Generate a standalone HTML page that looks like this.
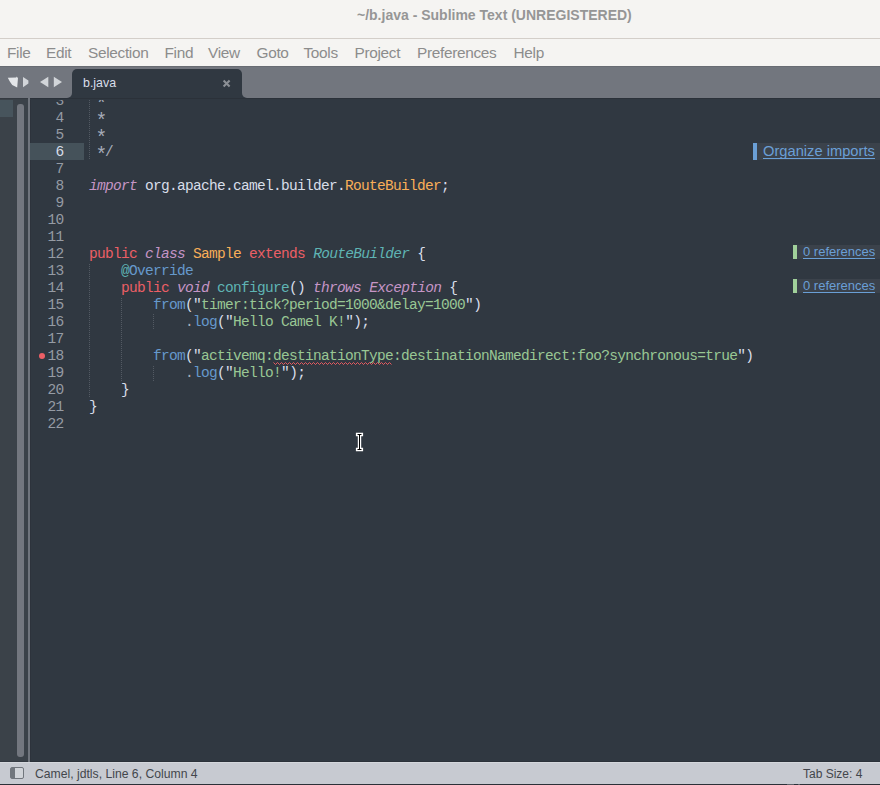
<!DOCTYPE html>
<html><head><meta charset="utf-8">
<style>
html,body{margin:0;padding:0;width:880px;height:785px;overflow:hidden;background:#303841;}
*{box-sizing:border-box;}
.abs{position:absolute;}
#title{left:0;top:0;width:880px;height:38px;background:#f5f4f2;}
#title span{position:absolute;left:357px;top:7px;font:bold 14px/16px "Liberation Sans",sans-serif;color:#969696;white-space:pre;}
#tline{left:0;top:38px;width:880px;height:1px;background:#d3cec9;box-shadow:0 1px 0 #f9f8f7;}
#menu{left:0;top:39px;width:880px;height:27px;background:#f5f4f2;}
#menu span{position:absolute;top:5px;font:15.4px/18px "Liberation Sans",sans-serif;letter-spacing:-0.32px;color:#8c8c8c;white-space:pre;}
#tabbar{left:0;top:66px;width:880px;height:32px;background:#72767e;}
#tabbar .ds{position:absolute;left:62px;top:20px;width:190px;height:12px;background:#303841;}
#tabbar .lp{position:absolute;left:0;top:0;width:72px;height:32px;background:#72767e;border-bottom-right-radius:5px;}
#tabbar .rp{position:absolute;left:242px;top:0;width:638px;height:32px;background:#72767e;border-bottom-left-radius:5px;}
#tabbar .top{position:absolute;left:0;top:0;width:880px;height:1px;background:#686c73;}
#tab{left:72px;top:69px;width:170px;height:29px;background:#303841;border-radius:5px 5px 0 0;}
#tab .lbl{position:absolute;left:11px;top:7px;font:12.4px/14px "Liberation Sans",sans-serif;color:#d8dee9;white-space:pre;}
#leftpanel{left:0;top:98px;width:28px;height:664px;background:#3b4249;}
#vline{left:28px;top:98px;width:2px;height:664px;background:#70757d;}
#editor{left:30px;top:98px;width:850px;height:664px;background:#303841;overflow:hidden;clip-path:inset(2px 0 0 0);}
#status{left:0;top:762px;width:880px;height:22px;background:#c7cad1;}
#status .tl{position:absolute;left:0;top:0;width:880px;height:1px;background:#d4d7dc;}
#status span{position:absolute;top:5px;font:12.2px/14px "Liberation Sans",sans-serif;color:#43464c;white-space:pre;}
#bottom{left:0;top:784px;width:880px;height:1px;background:#2b3038;}
.code{position:absolute;left:0;width:850px;height:17px;font:14.5px/17px "Liberation Mono",monospace;letter-spacing:-0.7px;white-space:pre;color:#d8dee9;}
.ln{position:absolute;left:0;top:1px;width:33.4px;text-align:right;color:#959ba4;}
.tx{position:absolute;left:59px;top:1px;}
.guide{position:absolute;width:1px;background:repeating-linear-gradient(to bottom,#535a63 0,#535a63 1px,transparent 1px,transparent 2px);}
#curhl{position:absolute;left:0;top:45px;width:54px;height:17px;background:#45525a;}
.cur .ln{color:#d8dee9}
.q{color:#d8dee9}.d{color:#a6acb9}
.phtxt{position:absolute;font-family:"Liberation Sans",sans-serif;color:#6a9fd6;white-space:pre;}
.st{display:inline-block;width:8px;transform:translate(0px,4px) scale(1.35);}
.r{color:#ec5f66}.p{color:#c695c6;font-style:italic}.o{color:#f9ae58}.t{color:#5fb4b4}.ti{color:#5fb4b4;font-style:italic}.b{color:#6699cc}.g{color:#99c794}.c{color:#a6acb9}
</style></head><body>
<div id="title" class="abs"><span>~/b.java - Sublime Text (UNREGISTERED)</span></div>
<div id="tline" class="abs"></div>
<div id="menu" class="abs">
<span style="left:7px">File</span><span style="left:46px">Edit</span><span style="left:88px">Selection</span><span style="left:164.5px">Find</span><span style="left:208px">View</span><span style="left:256.5px">Goto</span><span style="left:303.5px">Tools</span><span style="left:354.5px">Project</span><span style="left:417px">Preferences</span><span style="left:513.5px">Help</span>
</div>
<div id="tabbar" class="abs"><div class="ds"></div><div class="lp"></div><div class="rp"></div><div class="top"></div></div>
<svg class="abs" style="left:0;top:66px" width="72" height="32" viewBox="0 66 72 32">
<polygon points="7.8,77.8 16.3,77.6 16.6,76.6 17.3,77.6 18,77.8 17.2,87.4 12.2,85 9.8,81.6" fill="#e4e6e9"/>
<polygon points="23,77 28.4,80.6 28.4,83.4 23,87.2" fill="#d2d5d9"/>
<polygon points="40,82 48.3,76.8 48.3,87.2" fill="#d2d5d9"/>
<polygon points="53.8,76.8 62,82 53.8,87.2" fill="#d2d5d9"/>
</svg>
<div id="tab" class="abs"><span class="lbl">b.java</span></div>
<div id="leftpanel" class="abs"></div>
<div id="vline" class="abs"></div>
<div class="abs" style="left:0;top:98px;width:28px;height:1px;background:#353a41"></div>
<div class="abs" style="left:0;top:100px;width:13px;height:17px;background:#47545c"></div>
<div class="abs" style="left:17px;top:104px;width:7px;height:653px;background:#73777f;border-radius:3px"></div>
<div class="abs" style="left:0;top:761px;width:28px;height:1px;background:#343a42"></div>
<div id="editor" class="abs">
<div class="abs" style="left:0;top:0;width:1px;height:664px;background:#2d333c"></div>
<div id="curhl"></div>
<div class="guide" style="left:59px;top:2px;height:59px"></div>
<div class="guide" style="left:59px;top:166px;height:133px"></div>
<div class="guide" style="left:91px;top:200px;height:83px"></div>
<div class="guide" style="left:123px;top:216px;height:15px"></div>
<div class="guide" style="left:123px;top:268px;height:15px"></div>
<div class="abs" style="left:9px;top:255px;width:6px;height:6px;border-radius:50%;background:#ec5f66"></div>
<div class="code" style="top:-6px"><span class="ln">3</span><span class="tx"><span class="c"> <span class="st">*</span></span></span></div>
<div class="code" style="top:11px"><span class="ln">4</span><span class="tx"><span class="c"> <span class="st">*</span></span></span></div>
<div class="code" style="top:28px"><span class="ln">5</span><span class="tx"><span class="c"> <span class="st">*</span></span></span></div>
<div class="code cur" style="top:45px"><span class="ln">6</span><span class="tx"><span class="c"> <span class="st">*</span>/</span></span></div>
<div class="code" style="top:62px"><span class="ln">7</span><span class="tx"></span></div>
<div class="code" style="top:79px"><span class="ln">8</span><span class="tx"><span class="p">import</span> org.apache.camel.builder.<span class="o">RouteBuilder</span>;</span></div>
<div class="code" style="top:96px"><span class="ln">9</span><span class="tx"></span></div>
<div class="code" style="top:113px"><span class="ln">10</span><span class="tx"></span></div>
<div class="code" style="top:130px"><span class="ln">11</span><span class="tx"></span></div>
<div class="code" style="top:147px"><span class="ln">12</span><span class="tx"><span class="r">public</span> <span class="p">class</span> <span class="o">Sample</span> <span class="r">extends</span> <span class="ti">RouteBuilder</span> {</span></div>
<div class="code" style="top:164px"><span class="ln">13</span><span class="tx">    <span class="t">@</span><span class="b">Override</span></span></div>
<div class="code" style="top:181px"><span class="ln">14</span><span class="tx">    <span class="r">public</span> <span class="p">void</span> <span class="t">configure</span>() <span class="p">throws</span> <span class="p">Exception</span> {</span></div>
<div class="code" style="top:198px"><span class="ln">15</span><span class="tx">        <span class="b">from</span>(<span class="q">"</span><span class="g">timer:tick?period=1000&amp;delay=1000</span><span class="q">"</span>)</span></div>
<div class="code" style="top:215px"><span class="ln">16</span><span class="tx">            <span class="d">.</span><span class="b">log</span>(<span class="q">"</span><span class="g">Hello Camel K!</span><span class="q">"</span>);</span></div>
<div class="code" style="top:232px"><span class="ln">17</span><span class="tx"></span></div>
<div class="code" style="top:249px"><span class="ln">18</span><span class="tx">        <span class="b">from</span>(<span class="q">"</span><span class="g">activemq:destinationType:destinationNamedirect:foo?synchronous=true</span><span class="q">"</span>)</span></div>
<div class="code" style="top:266px"><span class="ln">19</span><span class="tx">            <span class="d">.</span><span class="b">log</span>(<span class="q">"</span><span class="g">Hello!</span><span class="q">"</span>);</span></div>
<div class="code" style="top:283px"><span class="ln">20</span><span class="tx">    }</span></div>
<div class="code" style="top:300px"><span class="ln">21</span><span class="tx">}</span></div>
<div class="code" style="top:317px"><span class="ln">22</span><span class="tx"></span></div>
</div>
<div class="abs" style="left:30px;top:98px;width:850px;height:1px;background:#2b3139"></div>
<div class="abs" style="left:753px;top:143px;width:4px;height:17px;background:#6a9fd6"></div>
<div class="abs" style="left:757px;top:143px;width:123px;height:17px;background:#3b424b"></div>
<div class="phtxt" style="left:763px;top:143px;font-size:14.7px;line-height:17px;">Organize imports</div>
<div class="abs" style="left:763px;top:158px;width:112px;height:1px;background:#6a9fd6"></div>
<div class="abs" style="left:793px;top:245px;width:4px;height:14px;background:#a0d09a"></div>
<div class="abs" style="left:797px;top:245px;width:83px;height:14px;background:#3b424b"></div>
<div class="phtxt" style="left:803px;top:245px;font-size:13px;line-height:14px;">0 references</div>
<div class="abs" style="left:803px;top:258px;width:72px;height:1px;background:#6a9fd6"></div>
<div class="abs" style="left:793px;top:279px;width:4px;height:14px;background:#a0d09a"></div>
<div class="abs" style="left:797px;top:279px;width:83px;height:14px;background:#3b424b"></div>
<div class="phtxt" style="left:803px;top:279px;font-size:13px;line-height:14px;">0 references</div>
<div class="abs" style="left:803px;top:292px;width:72px;height:1px;background:#6a9fd6"></div>
<svg class="abs" style="left:222px;top:79px" width="10" height="10" viewBox="0 0 10 10"><path d="M1.6 1.6 L7.6 7.6 M7.6 1.6 L1.6 7.6" stroke="#8b8f95" stroke-width="2.1" stroke-linecap="butt"/></svg>
<svg class="abs" style="left:0;top:0" width="880" height="785" viewBox="0 0 880 785"><polyline points="273.5,362.5 275.5,364.5 277.5,362.5 279.5,364.5 281.5,362.5 283.5,364.5 285.5,362.5 287.5,364.5 289.5,362.5 291.5,364.5 293.5,362.5 295.5,364.5 297.5,362.5 299.5,364.5 301.5,362.5 303.5,364.5 305.5,362.5 307.5,364.5 309.5,362.5 311.5,364.5 313.5,362.5 315.5,364.5 317.5,362.5 319.5,364.5 321.5,362.5 323.5,364.5 325.5,362.5 327.5,364.5 329.5,362.5 331.5,364.5 333.5,362.5 335.5,364.5 337.5,362.5 339.5,364.5 341.5,362.5 343.5,364.5 345.5,362.5 347.5,364.5 349.5,362.5 351.5,364.5 353.5,362.5 355.5,364.5 357.5,362.5 359.5,364.5 361.5,362.5 363.5,364.5 365.5,362.5 367.5,364.5 369.5,362.5 371.5,364.5 373.5,362.5 375.5,364.5 377.5,362.5 379.5,364.5 381.5,362.5 383.5,364.5 385.5,362.5 387.5,364.5 389.5,362.5 391.5,364.5" fill="none" stroke="#e85a60" stroke-width="1"/><path d="M357.6 434.5 H361.4 M359.5 434.5 V449.5 M357.6 449.5 H361.4" stroke="#ffffff" stroke-width="3.4" stroke-linecap="square" stroke-linejoin="round" fill="none"/><path d="M357.5 434.5 H361.5 M359.5 434.5 V449.5 M357.5 449.5 H361.5" stroke="#000000" stroke-width="1" fill="none"/></svg>
<div id="status" class="abs"><div class="tl"></div>
<div class="abs" style="left:10px;top:5px;width:14px;height:12px;border:1px solid #71767d;border-radius:2px;background:linear-gradient(to right,#71767d 0,#71767d 4px,#d0d3d8 4px)"></div>
<span style="left:35px">Camel, jdtls, Line 6, Column 4</span>
<span style="left:803px;font-size:12px">Tab Size: 4</span>
</div>
<div id="bottom" class="abs"></div>
<div class="abs" style="left:30px;top:761px;width:850px;height:1px;background:#2b3139"></div>
<div class="abs" style="left:787px;top:784px;width:7px;height:1px;background:#5c6168"></div>
<div class="abs" style="left:798px;top:784px;width:2px;height:1px;background:#5c6168"></div>
</body></html>
